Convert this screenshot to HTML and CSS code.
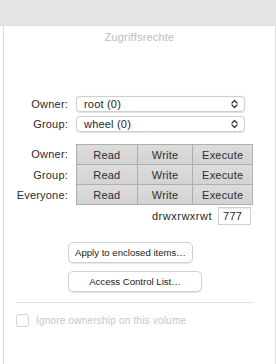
FILE: index.html
```html
<!DOCTYPE html>
<html>
<head>
<meta charset="utf-8">
<link rel="stylesheet" href="styles.css">
</head>
<body>
<div class="topbar"></div>
<div class="panel">
  <div class="title">Zugriffsrechte</div>

  <div class="owners">
    <div class="label">Owner:</div>
    <div class="popup"><span>root (0)</span>
      <svg class="arrows" width="7" height="10" viewBox="0 0 7 10"><path d="M1 4 L3.5 1.5 L6 4 M1 6 L3.5 8.5 L6 6" fill="none" stroke="#333" stroke-width="1.3" stroke-linecap="round" stroke-linejoin="round"/></svg>
    </div>
    <div class="label">Group:</div>
    <div class="popup"><span>wheel (0)</span>
      <svg class="arrows" width="7" height="10" viewBox="0 0 7 10"><path d="M1 4 L3.5 1.5 L6 4 M1 6 L3.5 8.5 L6 6" fill="none" stroke="#333" stroke-width="1.3" stroke-linecap="round" stroke-linejoin="round"/></svg>
    </div>
  </div>

  <div class="perms">
    <div class="label">Owner:</div>
    <div class="cells first"><div class="cell c1">Read</div><div class="cell c2">Write</div><div class="cell c3">Execute</div></div>
    <div class="label">Group:</div>
    <div class="cells"><div class="cell c1">Read</div><div class="cell c2">Write</div><div class="cell c3">Execute</div></div>
    <div class="label">Everyone:</div>
    <div class="cells"><div class="cell c1">Read</div><div class="cell c2">Write</div><div class="cell c3">Execute</div></div>
  </div>

  <div class="mode">
    <span class="modestr">drwxrwxrwt</span>
    <div class="octal">777</div>
  </div>

  <div class="buttons">
    <div class="btn b1">Apply to enclosed items…</div>
    <div class="btn b2">Access Control List…</div>
  </div>

  <div class="sep"></div>

  <div class="check">
    <div class="box"></div>
    <span>Ignore ownership on this volume</span>
  </div>
</div>
</body>
</html>
```

FILE: styles.css
```css
html, body {
  margin: 0;
  padding: 0;
  background: #ffffff;
}
body {
  width: 276px;
  height: 364px;
  overflow: hidden;
  font-family: "Liberation Sans", Arial, sans-serif;
  font-size: 11px;
  color: #262626;
}
.topbar {
  height: 25px;
  background: #e4e6e6;
  border-bottom: 1px solid #dcdede;
}
.panel {
  margin-left: 3px;
  height: 338px;
  border-left: 1px solid #dcdcdc;
  border-right: 1px solid #dcdcdc;
  display: flex;
  flex-direction: column;
}
.title {
  text-align: center;
  color: #bdbdbd;
  font-size: 11px;
  line-height: 14px;
  height: 14px;
  margin-top: 4px;
  letter-spacing: 0.2px;
}
.owners {
  margin-top: 52px;
  display: grid;
  grid-template-columns: 64px 169px;
  grid-auto-rows: 16px;
  column-gap: 8px;
  row-gap: 4px;
  align-items: center;
}
.label {
  text-align: right;
  color: #2a2a2a;
  line-height: 16px;
  white-space: nowrap;
  letter-spacing: 0.2px;
}
.popup {
  height: 14px;
  border: 1px solid #cfcfcf;
  border-radius: 4px;
  background: #fff;
  box-shadow: 0 0.5px 1px rgba(0,0,0,0.12);
  display: flex;
  align-items: center;
  justify-content: space-between;
  padding: 0 6px 0 7px;
  line-height: 14px;
  letter-spacing: 0.2px;
}
.arrows {
  display: block;
}
.perms {
  margin-top: 12px;
  display: grid;
  grid-template-columns: 64px 177px;
  grid-template-rows: 21px 20px 20px;
  column-gap: 8px;
  align-items: stretch;
}
.perms .label {
  line-height: 21px;
}
.cells {
  display: flex;
  border-left: 1px solid #aeaeae;
  border-bottom: 1px solid #aeaeae;
}
.cells.first {
  border-top: 1px solid #aeaeae;
}
.cell {
  background: linear-gradient(#dcdcdc, #d3d3d3);
  border-right: 1px solid #aeaeae;
  display: flex;
  align-items: center;
  justify-content: center;
  color: #2e2e2e;
  white-space: nowrap;
  letter-spacing: 0.2px;
}
.c1 { width: 60px; }
.c2 { width: 55px; }
.c3 { width: 59px; }
.mode {
  margin-top: 2px;
  height: 18px;
  display: flex;
  align-items: center;
  justify-content: flex-end;
  width: 247px;
  gap: 6px;
}
.modestr {
  color: #262626;
  letter-spacing: 0.5px;
}
.octal {
  width: 27px;
  height: 16px;
  border: 1px solid #d0d0d0;
  padding-left: 4px;
  line-height: 16px;
  box-shadow: inset 0 1px 0 #ececec;
  letter-spacing: 0.3px;
}
.buttons {
  margin-top: 17px;
  padding-left: 64px;
  display: flex;
  flex-direction: column;
  align-items: flex-start;
  gap: 8px;
}
.btn {
  height: 19px;
  line-height: 19px;
  border: 1px solid #d0d0d0;
  border-radius: 5px;
  background: #fff;
  box-shadow: 0 1px 1px rgba(0,0,0,0.10);
  text-align: center;
  font-size: 9.6px;
  color: #222;
  white-space: nowrap;
}
.b1 { width: 123px; }
.b2 { width: 132px; }
.sep {
  margin: 10px 0 0 12px;
  width: 238px;
  height: 1px;
  background: #e2e2e2;
}
.check {
  margin-top: 11px;
  padding-left: 12px;
  display: flex;
  align-items: center;
  gap: 7px;
  color: #c6c6c6;
  font-size: 10px;
  white-space: nowrap;
  letter-spacing: 0.2px;
}
.box {
  width: 11px;
  height: 11px;
  border: 1px solid #d4d4d4;
  border-radius: 3px;
  background: #fff;
}
```
